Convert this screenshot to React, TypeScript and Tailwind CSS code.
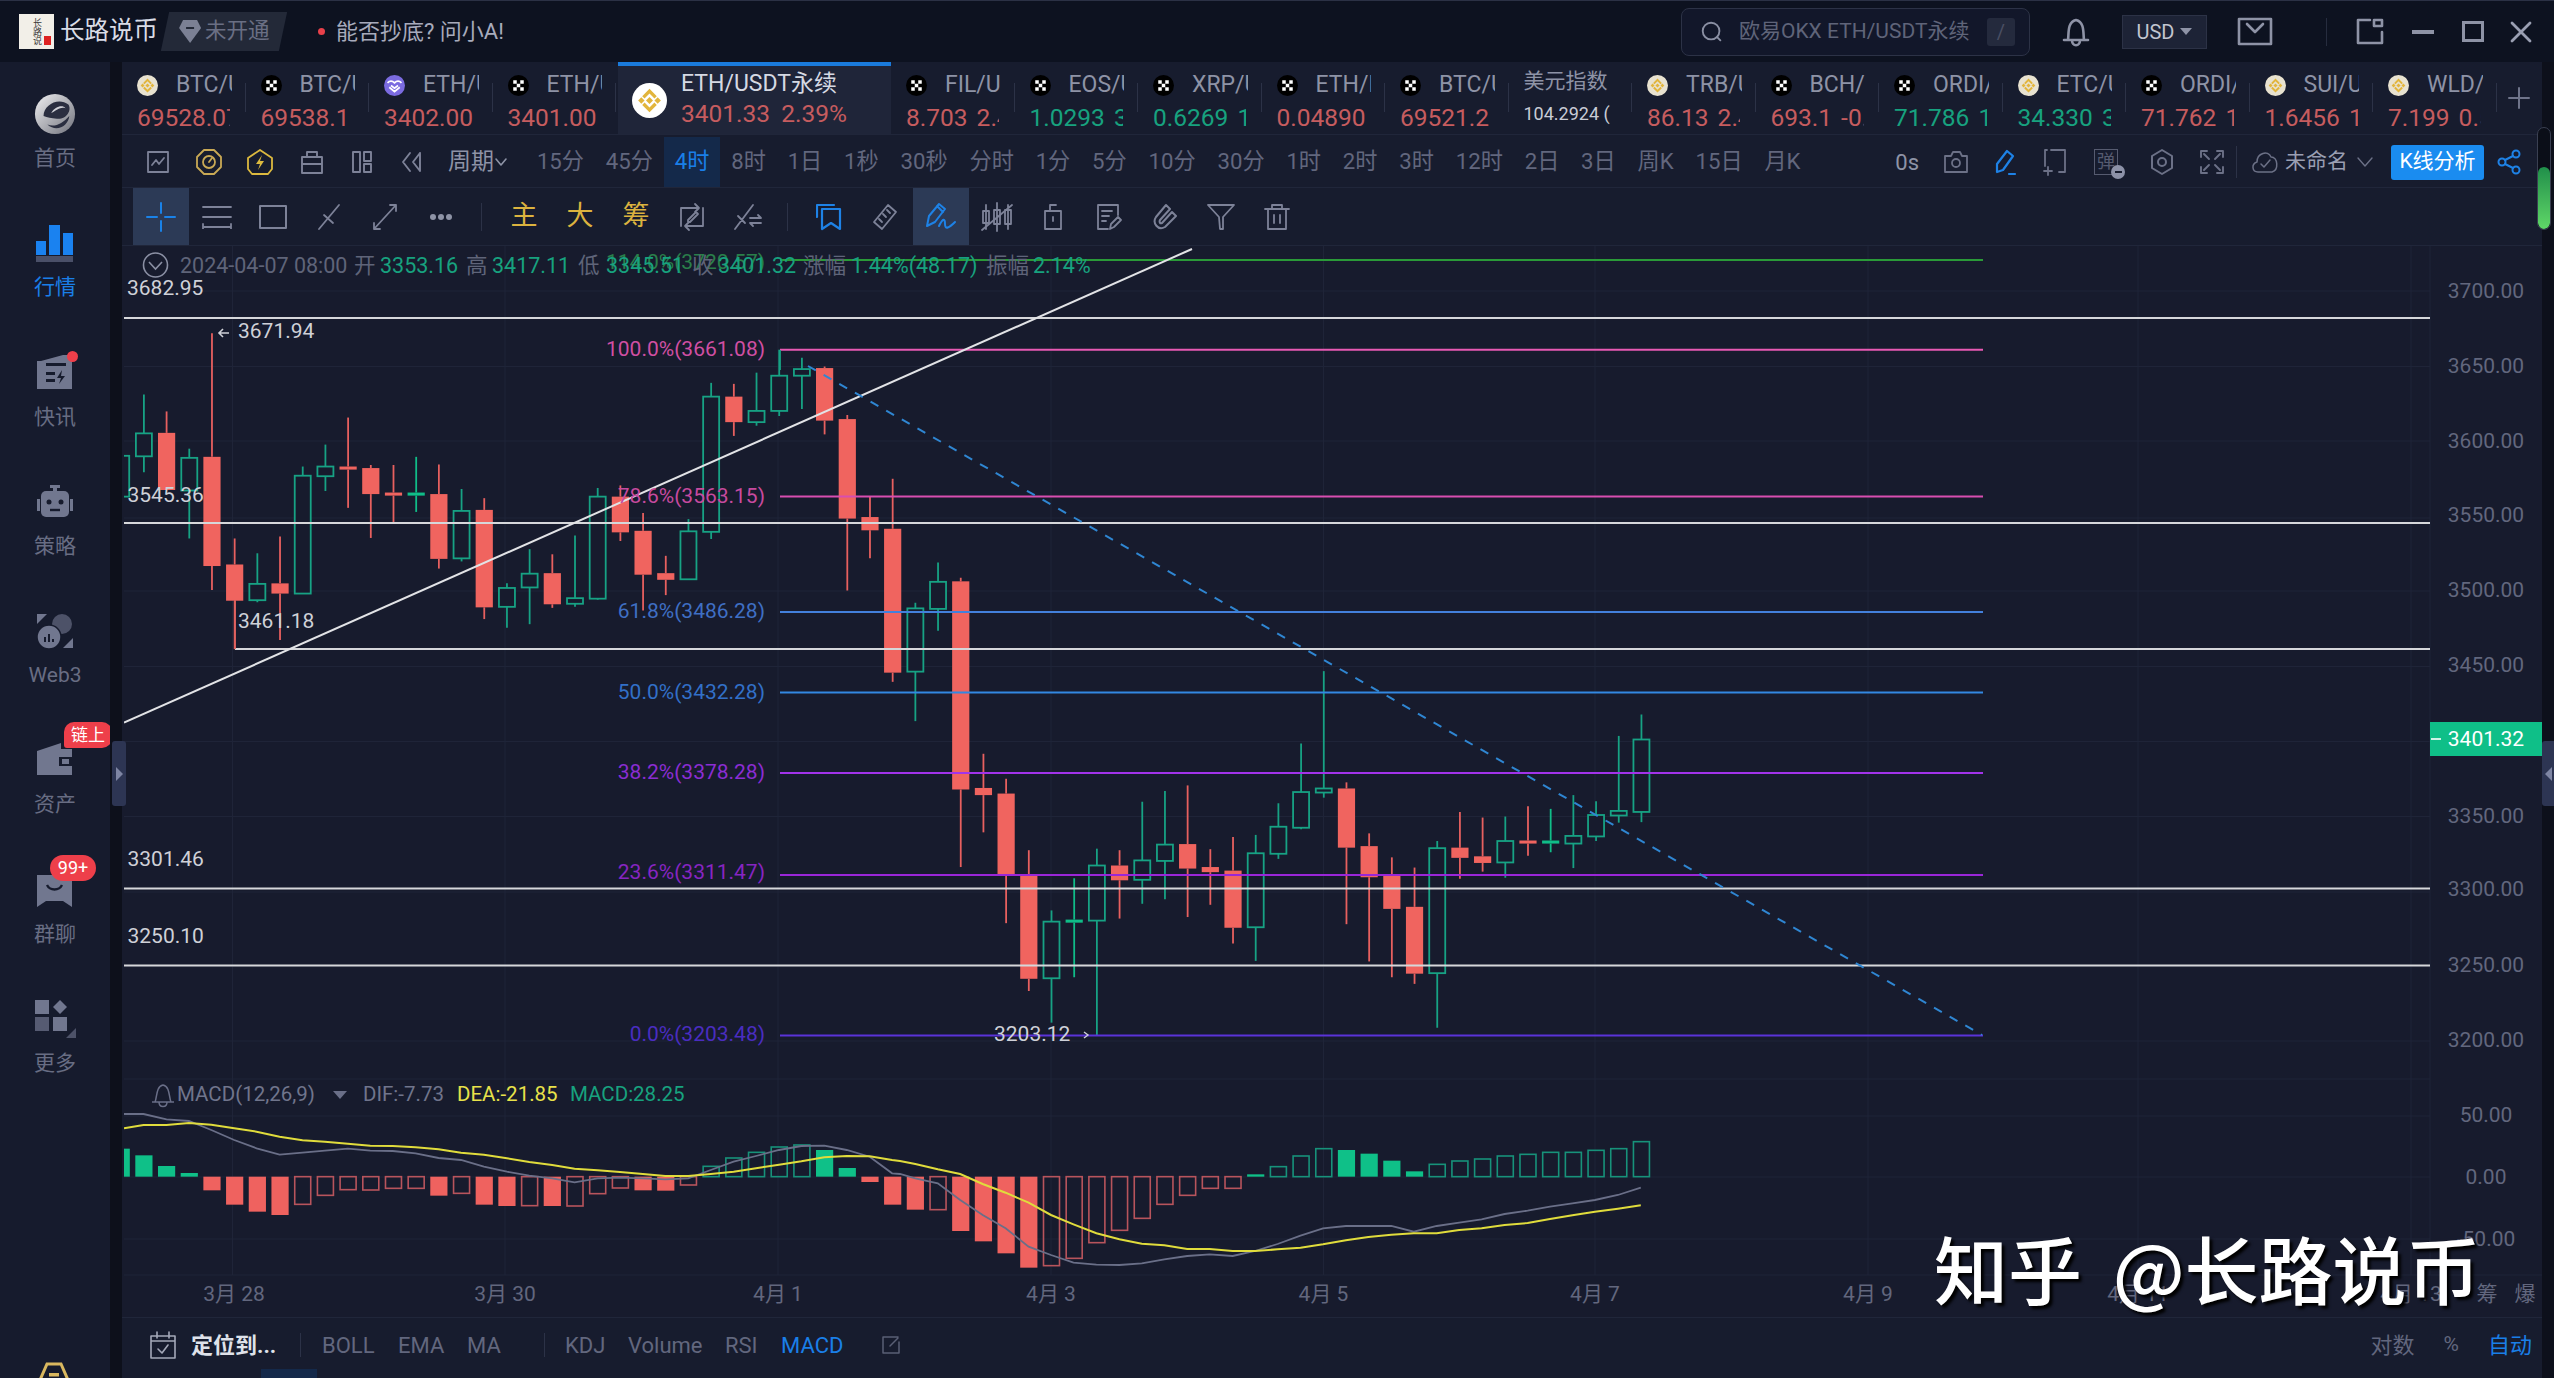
import React from "react";

const Sv = ({ w = 28, h = 28, vb = "0 0 28 28", c = "#7d8298", sw = 1.8, children }: { w?: number; h?: number; vb?: string; c?: string; sw?: number; children: React.ReactNode }) => (
  <svg width={w} height={h} viewBox={vb} fill="none" stroke={c} strokeWidth={sw} strokeLinecap="round" strokeLinejoin="round">
    {children}
  </svg>
);

const BinanceMark = ({ c = "#e2b53c" }: { c?: string }) => (
  <g fill={c} stroke="none">
    <polygon points="12,9.6 14.4,12 12,14.4 9.6,12" />
    <polygon points="6.4,9.8 8.6,12 6.4,14.2 4.2,12" />
    <polygon points="17.6,9.8 19.8,12 17.6,14.2 15.4,12" />
    <polygon points="12,4 17,9 15.4,10.6 12,7.2 8.6,10.6 7,9" />
    <polygon points="12,20 17,15 15.4,13.4 12,16.8 8.6,13.4 7,15" />
  </g>
);

const CoinIcon = ({ t, size = 21 }: { t: string; size?: number }) => (
  <svg width={size} height={size} viewBox="0 0 24 24" className="shrink-0">
    {t === "b" && (
      <>
        <circle cx="12" cy="12" r="12" fill={size > 30 ? "#ffffff" : "#e8e2d0"} />
        <BinanceMark />
      </>
    )}
    {t === "o" && (
      <>
        <circle cx="12" cy="12" r="12" fill="#000" />
        <g fill="#fff">
          <rect x="6" y="6" width="4" height="4" />
          <rect x="14" y="6" width="4" height="4" />
          <rect x="10" y="10" width="4" height="4" />
          <rect x="6" y="14" width="4" height="4" />
          <rect x="14" y="14" width="4" height="4" />
        </g>
      </>
    )}
    {t === "v" && (
      <>
        <circle cx="12" cy="12" r="12" fill="#7b6be0" />
        <path d="M4 9 Q8 5 12 9 Q16 5 20 9 M6 14 L12 19 L18 14 M8 12 L12 15 L16 12" stroke="#fff" strokeWidth="2" fill="none" />
      </>
    )}
  </svg>
);

const RED = "text-[#c65c5f]";
const GRN = "text-[#17a27f]";

const leftTabs = [
  { i: "b", l: "BTC/USDT", p: "69528.07 2.1%", r: true },
  { i: "o", l: "BTC/USDT", p: "69538.1 2.1%", r: true },
  { i: "v", l: "ETH/USDT", p: "3402.00 2.4%", r: true },
  { i: "o", l: "ETH/USDT", p: "3401.00 2.4%", r: true },
];
const rightTabs = [
  { i: "o", l: "FIL/USDT", p: "8.703 2.4%", r: true },
  { i: "o", l: "EOS/USDT", p: "1.0293 3.1%", r: false },
  { i: "o", l: "XRP/USDT", p: "0.6269 1.2%", r: false },
  { i: "o", l: "ETH/BTC", p: "0.04890 0.2%", r: true },
  { i: "o", l: "BTC/USDT", p: "69521.2 2.1%", r: true },
  { i: "x", l: "美元指数", p: "104.2924 (", r: false },
  { i: "b", l: "TRB/USDT", p: "86.13 2.4%", r: true },
  { i: "o", l: "BCH/USDT", p: "693.1 -0.2%", r: true },
  { i: "o", l: "ORDI/USDT", p: "71.786 1.2%", r: false },
  { i: "b", l: "ETC/USDT", p: "34.330 3.1%", r: false },
  { i: "o", l: "ORDI/USDT", p: "71.762 1.2%", r: true },
  { i: "b", l: "SUI/USDT", p: "1.6456 1.2%", r: true },
  { i: "b", l: "WLD/USDT", p: "7.199 0.5%", r: true },
];

const Tab = ({ t }: { t: { i: string; l: string; p: string; r: boolean } }) => {
  if (t.i === "x") {
    return (
      <div className="relative w-[123.5px] shrink-0 h-full flex pl-[15px] pr-[14px]">
        <div className="w-[95px] overflow-hidden whitespace-nowrap flex flex-col">
          <span className="text-[21px] leading-[28px] mt-[5px] text-[#8e93a6]">{t.l}</span>
          <span className="text-[18px] leading-[26px] mt-[6px] text-[#c9ccd6]">{t.p}</span>
        </div>
        <div className="absolute right-[0px] top-[21px] h-[29px] w-[1px] bg-[#2c3247]" />
      </div>
    );
  }
  return (
    <div className="relative w-[123.5px] shrink-0 h-full flex pl-[15px] pr-[14px]">
      <div className="w-[95px] overflow-hidden whitespace-nowrap flex flex-col">
        <div className="flex items-center h-[30px] mt-[8px]">
          <CoinIcon t={t.i} />
          <span className="text-[23px] ml-[18px] w-[56px] overflow-hidden text-[#8e93a6]">{t.l}</span>
        </div>
        <span className={`text-[24.5px] leading-[32px] mt-[2px] w-[93px] overflow-hidden [word-spacing:3px] ${t.r ? RED : GRN}`}>{t.p}</span>
      </div>
      <div className="absolute right-[0px] top-[21px] h-[29px] w-[1px] bg-[#2c3247]" />
    </div>
  );
};

const frames = ["15分", "45分", "4时", "8时", "1日", "1秒", "30秒", "分时", "1分", "5分", "10分", "30分", "1时", "2时", "3时", "12时", "2日", "3日", "周K", "15日", "月K"];

const TB = ({ children, active }: { children: React.ReactNode; active?: boolean }) => (
  <div className={`w-[56px] h-full shrink-0 flex items-center justify-center ${active ? "bg-[#2c3a56]" : ""}`}>{children}</div>
);

const SideItem = ({ label, color = "text-[#686d83]", children, extra }: { label: string; color?: string; children: React.ReactNode; extra?: React.ReactNode }) => (
  <div className="relative h-[129.3px] shrink-0 w-full flex flex-col items-center">
    <div className="h-[40px] flex items-center justify-center">{children}</div>
    <span className={`mt-[10px] text-[21px] leading-[28px] ${color}`}>{label}</span>
    {extra}
  </div>
);

// [kind, bodyTop, bodyBottom, wickTop, wickBottom]  (values relative to a 1.96x scale from y=290)
type C = [string, number, number, number, number];
const candles: C[] = [
  ["g", 325, 405, 300, 450],
  ["g", 281, 326, 205, 357],
  ["r", 280, 392, 238, 392],
  ["g", 329, 393, 311, 487],
  ["r", 327, 541, 85, 588],
  ["r", 538, 609, 487, 704],
  ["g", 576, 608, 516, 612],
  ["r", 575, 595, 483, 686],
  ["g", 364, 595, 346, 595],
  ["g", 346, 365, 303, 394],
  ["r", 346, 352, 250, 427],
  ["r", 349, 400, 343, 486],
  ["r", 397, 403, 343, 456],
  ["G", 397, 403, 327, 435],
  ["r", 400, 527, 342, 546],
  ["g", 433, 526, 390, 532],
  ["r", 431, 622, 408, 645],
  ["g", 584, 621, 575, 662],
  ["g", 556, 583, 508, 655],
  ["r", 555, 616, 518, 623],
  ["g", 604, 615, 481, 621],
  ["g", 405, 605, 388, 607],
  ["r", 405, 475, 383, 492],
  ["r", 472, 558, 437, 628],
  ["r", 555, 568, 521, 598],
  ["g", 473, 567, 449, 567],
  ["g", 209, 474, 182, 488],
  ["r", 209, 259, 184, 286],
  ["g", 237, 259, 162, 266],
  ["g", 168, 237, 117, 247],
  ["g", 155, 168, 133, 233],
  ["r", 153, 256, 150, 283],
  ["r", 253, 448, 245, 589],
  ["r", 445, 471, 405, 526],
  ["r", 468, 750, 370, 768],
  ["g", 624, 748, 613, 845],
  ["g", 572, 625, 534, 668],
  ["r", 571, 979, 564, 1131],
  ["r", 976, 990, 909, 1063],
  ["r", 987, 1146, 958, 1241],
  ["r", 1146, 1350, 1098, 1374],
  ["g", 1238, 1349, 1216, 1436],
  ["G", 1234, 1240, 1153, 1347],
  ["g", 1128, 1236, 1095, 1461],
  ["r", 1128, 1157, 1098, 1232],
  ["g", 1118, 1156, 1003, 1203],
  ["g", 1087, 1119, 982, 1194],
  ["r", 1086, 1134, 971, 1229],
  ["r", 1131, 1141, 1096, 1205],
  ["r", 1138, 1250, 1072, 1281],
  ["g", 1104, 1249, 1068, 1315],
  ["g", 1052, 1105, 1006, 1115],
  ["g", 984, 1054, 889, 1057],
  ["g", 977, 985, 747, 995],
  ["r", 977, 1093, 965, 1243],
  ["r", 1090, 1151, 1065, 1316],
  ["r", 1147, 1213, 1112, 1347],
  ["r", 1209, 1340, 1132, 1360],
  ["g", 1094, 1339, 1080, 1446],
  ["r", 1093, 1113, 1023, 1154],
  ["r", 1110, 1123, 1034, 1140],
  ["g", 1080, 1122, 1032, 1152],
  ["r", 1079, 1085, 1012, 1109],
  ["G", 1079, 1085, 1017, 1102],
  ["g", 1070, 1085, 990, 1133],
  ["g", 1029, 1071, 1002, 1080],
  ["g", 1021, 1030, 874, 1044],
  ["g", 881, 1023, 832, 1043],
];
const cx = (i: number) => 143.9 + 22.69 * (i - 1);
const cy = (v: number) => 290 + v / 1.96;

// MACD bars: [kind, y-edge in 3x from y=1050] zero at 380
const bars: [string, number][] = [
  ["G", 296], ["G", 316], ["G", 348], ["G", 369], ["R", 421], ["R", 464], ["R", 485], ["R", 495], ["r", 463], ["r", 436],
  ["r", 419], ["r", 420], ["r", 415], ["r", 415], ["R", 437], ["r", 430], ["R", 464], ["R", 468], ["r", 467], ["R", 468],
  ["r", 468], ["r", 431], ["r", 414], ["R", 421], ["R", 422], ["r", 405], ["g", 349], ["g", 324], ["g", 307], ["g", 291],
  ["g", 285], ["G", 300], ["G", 354], ["R", 396], ["R", 464], ["R", 479], ["r", 479], ["R", 543], ["R", 574], ["R", 610],
  ["R", 653], ["r", 647], ["r", 625], ["r", 578], ["r", 541], ["r", 505], ["r", 463], ["r", 436], ["r", 415], ["r", 415],
  ["G", 373], ["g", 350], ["g", 318], ["g", 296], ["G", 300], ["G", 311], ["G", 332], ["G", 364], ["g", 343], ["g", 333],
  ["g", 327], ["g", 318], ["g", 313], ["g", 307], ["g", 307], ["g", 301], ["g", 296], ["g", 275],
];

const dif6 = [216,192,250,192,290,208,329,213,368,240,408,270,447,295,487,314,527,308,566,302,606,296,645,302,684,303,724,310,764,324,803,330,843,350,883,365,922,377,962,385,1001,397,1041,385,1080,383,1120,385,1159,388,1199,385,1238,360,1278,335,1317,318,1357,300,1396,288,1436,287,1475,300,1515,320,1554,370];
const dif7 = [0,372,30,385,74,400,118,450,162,495,207,535,252,590,296,615,340,638,385,644,430,645,474,640,518,628,563,618,607,613,652,618,696,603,740,582,785,557,829,535,874,528,918,528,963,528,1007,545,1052,528,1096,518,1140,508,1185,492,1230,482,1274,470,1318,460,1362,450,1407,435,1452,413];
const dea6 = [216,235,250,225,290,225,329,219,368,224,408,235,447,245,487,260,527,271,566,275,606,281,645,287,684,288,724,292,764,298,803,308,843,314,883,325,922,336,962,345,1001,356,1041,361,1080,366,1120,372,1159,378,1199,378,1238,372,1278,365,1317,355,1357,344,1396,334,1436,322,1475,318,1515,319,1554,330];
const dea7 = [0,333,30,342,74,358,118,372,162,402,207,428,252,458,296,495,340,523,385,550,430,568,474,581,518,586,563,597,607,597,652,603,696,603,740,598,785,593,829,583,874,571,918,561,963,554,1007,550,1052,550,1096,540,1140,535,1185,525,1230,519,1274,507,1318,496,1362,485,1407,476,1452,466];
const toPts = (a: number[], k: number, off: number) => {
  const out: string[] = [];
  for (let i = 0; i < a.length; i += 2) out.push(`${(off + a[i] / k).toFixed(1)},${(1050 + a[i + 1] / 3).toFixed(1)}`);
  return out.join(" ");
};

const whiteLines = [318, 523, 649, 888.5, 965.5];
const fibs: [number, string, string, string][] = [
  [260, "#2a9a38", "114.0%(3720.57)", "#2a7f4a"],
  [349.7, "#e85ab4", "100.0%(3661.08)", "#d04fa3"],
  [496.6, "#d84eb0", "78.6%(3563.15)", "#c74a9f"],
  [612, "#4380dc", "61.8%(3486.28)", "#3f6fc4"],
  [692.5, "#3388e2", "50.0%(3432.28)", "#3270c8"],
  [773, "#a233ea", "38.2%(3378.28)", "#8b2dd3"],
  [875, "#9a26d8", "23.6%(3311.47)", "#8725c2"],
  [1035.4, "#5a33d8", "0.0%(3203.48)", "#4a2dc0"],
];
const prices: [string, number][] = [["3700.00", 291], ["3650.00", 366], ["3600.00", 441], ["3550.00", 515], ["3500.00", 590], ["3450.00", 665], ["3350.00", 816], ["3300.00", 889], ["3250.00", 965], ["3200.00", 1040]];
const gridH = [291, 366.5, 441, 518, 591, 666.5, 741.5, 816.5, 892, 966, 1041, 1079, 1116, 1177, 1239, 1275];
const gridV = [232.5, 505, 778, 1051, 1323.5, 1595, 1868, 2138, 2411];
const dates: [string, number][] = [["3月 28", 234], ["3月 30", 505], ["4月 1", 778], ["4月 3", 1051], ["4月 5", 1323.5], ["4月 7", 1595], ["4月 9", 1868], ["4月 11", 2138], ["4月 13", 2411]];
const info: [string, number, string][] = [
  ["2024-04-07 08:00", 180, "#5f6479"],
  ["开", 354, "#5f6479"], ["3353.16", 380, "#17a27f"],
  ["高", 466, "#5f6479"], ["3417.11", 492, "#17a27f"],
  ["低", 578, "#5f6479"], ["3345.51", 606, "#17a27f"],
  ["收", 692, "#5f6479"], ["3401.32", 718, "#17a27f"],
  ["涨幅", 803, "#5f6479"], ["1.44%(48.17)", 851, "#17a27f"],
  ["振幅", 986, "#5f6479"], ["2.14%", 1033, "#17a27f"],
];
const chartLabels: [string, number, number][] = [
  ["3682.95", 127, 288], ["3671.94", 238, 331], ["3545.36", 127.5, 495], ["3461.18", 238, 621], ["3301.46", 127.5, 859], ["3250.10", 127.5, 936], ["3203.12", 994, 1034],
];

const Chart = () => (
  <svg width={2420} height={1071} viewBox="122 246 2420 1071" className="block">
    <defs>
      <clipPath id="plot">
        <rect x="124" y="246" width="2306" height="1071" />
      </clipPath>
    </defs>
    {gridH.map((y) => <line key={y} x1="124" x2={y > 1270 ? 2542 : 2430} y1={y} y2={y} stroke="#1f2438" strokeWidth="1" />)}
    {gridV.map((x) => <line key={x} x1={x} x2={x} y1="246" y2="1275" stroke="#1f2438" strokeWidth="1" />)}
    <line x1="2430" x2="2430" y1="246" y2="1275" stroke="#1f2438" strokeWidth="1" />

    <g clipPath="url(#plot)">
      {candles.map((c, i) => {
        const x = cx(i);
        const col = c[0] === "r" ? "#e7605f" : c[0] === "G" ? "#10bd88" : "#17a284";
        return (
          <g key={i}>
            <line x1={x} x2={x} y1={cy(c[3])} y2={cy(c[1])} stroke={col} strokeWidth="1.8" />
            <line x1={x} x2={x} y1={cy(c[2])} y2={cy(c[4])} stroke={col} strokeWidth="1.8" />
            {c[0] === "g" ? (
              <rect x={x - 8} y={cy(c[1])} width="16" height={cy(c[2]) - cy(c[1])} fill="#171b2d" stroke={col} strokeWidth="1.8" />
            ) : (
              <rect x={x - 8.6} y={cy(c[1])} width="17.2" height={cy(c[2]) - cy(c[1])} fill={c[0] === "r" ? "#f0645f" : "#10bd88"} />
            )}
          </g>
        );
      })}

      {whiteLines.map((y) => <line key={y} x1={y === 649 ? 235 : 124} x2="2430" y1={y} y2={y} stroke="#d6d7da" strokeWidth="2" />)}
      <line x1="235" x2="235" y1="600" y2="649" stroke="#e0625f" strokeWidth="1.8" />
      {fibs.map((f) => <line key={f[2]} x1="780" x2="1983" y1={f[0]} y2={f[0]} stroke={f[1]} strokeWidth="2" />)}
      <line x1="124" y1="722.6" x2="1192" y2="249" stroke="#e2e3e6" strokeWidth="2" />
      <line x1="808" y1="366" x2="1982" y2="1035" stroke="#2f86d2" strokeWidth="2" strokeDasharray="9 9" />
      <line x1="780" x2="780" y1="350" y2="370" stroke="#17a284" strokeWidth="1.8" />

      {bars.map((b, i) => {
        const x = cx(i);
        const y0 = 1050 + 380 / 3;
        const y1 = 1050 + b[1] / 3;
        const top = Math.min(y0, y1);
        const h = Math.abs(y1 - y0);
        if (b[0] === "G") return <rect key={i} x={x - 8.6} y={top} width="17.2" height={h} fill="#0fc088" />;
        if (b[0] === "R") return <rect key={i} x={x - 8.6} y={top} width="17.2" height={h} fill="#ef625f" />;
        return <rect key={i} x={x - 8} y={top} width="16" height={h} fill="none" stroke={b[0] === "g" ? "#17927a" : "#b8545c"} strokeWidth="1.6" />;
      })}
      <polyline points={toPts(dif6, 1.742, 0) + " " + toPts(dif7, 1.96, 900)} fill="none" stroke="#6a6f88" strokeWidth="1.8" />
      <polyline points={toPts(dea6, 1.742, 0) + " " + toPts(dea7, 1.96, 900)} fill="none" stroke="#e0dc3c" strokeWidth="2" />
    </g>

    {/* status line */}
    <circle cx="155.5" cy="265" r="12" fill="none" stroke="#8a8fa3" strokeWidth="1.6" />
    <path d="M149 262 L155.5 269 L162 262" fill="none" stroke="#8a8fa3" strokeWidth="1.6" />
    {fibs.map((f, i) => (
      <text key={f[2]} x="765" y={i === 0 ? 262 : f[0] - (i === 6 ? 3 : 1)} textAnchor="end" dominantBaseline="central" fontSize="21" fill={f[3]}>{f[2]}</text>
    ))}
    {info.map((t) => <text key={t[0] + t[1]} x={t[1]} y="265" dominantBaseline="central" fontSize="21.5" fill={t[2]}>{t[0]}</text>)}

    {chartLabels.map((t) => <text key={t[0]} x={t[1]} y={t[2]} dominantBaseline="central" fontSize="21" fill="#cfd1d8">{t[0]}</text>)}
    <path d="M229 333 H219 M223 329 L219 333 L223 337" fill="none" stroke="#cfd1d8" strokeWidth="1.6" />
    <path d="M1084 1032 L1088 1035 L1084 1038" fill="none" stroke="#cfd1d8" strokeWidth="1.4" />

    {/* MACD legend */}
    <g fill="none" stroke="#6a6f88" strokeWidth="1.5">
      <path d="M152 1102 H174 M155 1102 C157 1098 156 1086 163 1085 C170 1086 169 1098 171 1102 M159 1102 C159 1108 167 1108 167 1102" />
    </g>
    <text x="177" y="1094" dominantBaseline="central" fontSize="20.5" fill="#70758c">MACD(12,26,9)</text>
    <polygon points="333,1091 347,1091 340,1099" fill="#6a6f88" />
    <text x="363" y="1094" dominantBaseline="central" fontSize="20.5" fill="#70758c">DIF:-7.73</text>
    <text x="457" y="1094" dominantBaseline="central" fontSize="20.5" fill="#e8e24a">DEA:-21.85</text>
    <text x="570" y="1094" dominantBaseline="central" fontSize="20.5" fill="#17a27f">MACD:28.25</text>

    {/* axes */}
    {prices.map((p) => <text key={p[0]} x="2486" y={p[1]} textAnchor="middle" dominantBaseline="central" fontSize="21" fill="#62677e">{p[0]}</text>)}
    <rect x="2430" y="722" width="112" height="34" fill="#0fbf88" />
    <line x1="2431" x2="2441" y1="739" y2="739" stroke="#fff" strokeWidth="1.6" />
    <text x="2486" y="739" textAnchor="middle" dominantBaseline="central" fontSize="21" fill="#ffffff">3401.32</text>
    <text x="2486" y="1115" textAnchor="middle" dominantBaseline="central" fontSize="21" fill="#62677e">50.00</text>
    <text x="2486" y="1177" textAnchor="middle" dominantBaseline="central" fontSize="21" fill="#62677e">0.00</text>
    <text x="2486" y="1239" textAnchor="middle" dominantBaseline="central" fontSize="21" fill="#62677e">-50.00</text>
    {dates.map((d) => <text key={d[0]} x={d[1]} y="1294" textAnchor="middle" dominantBaseline="central" fontSize="21" fill="#62677e">{d[0]}</text>)}
    <text x="2487" y="1294" textAnchor="middle" dominantBaseline="central" fontSize="21" fill="#62677e">筹</text>
    <text x="2525" y="1294" textAnchor="middle" dominantBaseline="central" fontSize="21" fill="#62677e">爆</text>
  </svg>
);

export default function App() {
  return (
    <div className="w-[2554px] h-[1378px] overflow-hidden relative flex flex-col bg-[#171b2d] [font-family:Roboto,'Noto_Sans_CJK_SC',sans-serif]">
      {/* Top bar */}
      <header className="h-[62px] shrink-0 flex items-center bg-[#0d1220] border-t border-[#2b3145] pl-[19px] pr-[22px]">
        <div className="w-[35px] h-[35px] bg-[#f2efe8] relative shrink-0 flex flex-col items-center justify-center">
          <span className="text-[#3a3a3a] text-[9px] leading-[9px] [writing-mode:vertical-rl]">长路说</span>
          <div className="absolute right-[3px] bottom-[4px] w-[7px] h-[9px] bg-[#d22]" />
        </div>
        <span className="ml-[6px] text-[24.5px] text-[#d9dce6] whitespace-nowrap">长路说币</span>
        <div className="ml-[7px] w-[118px] h-[39px] bg-[#232938] -skew-x-12 flex items-center justify-center shrink-0">
          <div className="skew-x-12 flex items-center gap-[3px]">
            <svg width="24" height="26" viewBox="0 0 24 26"><path d="M5 2 H19 L23 10 L12 25 L1 10 Z" fill="#7b8094" /><rect x="8" y="9" width="8" height="2" fill="#232938" /></svg>
            <span className="text-[21.5px] text-[#6a6f84] whitespace-nowrap">未开通</span>
          </div>
        </div>
        <div className="ml-[35px] w-[7px] h-[7px] rounded-full bg-[#e8404a] shrink-0" />
        <span className="ml-[11px] text-[22px] text-[#a7abbc] whitespace-nowrap">能否抄底? 问小A!</span>

        <div className="ml-auto flex items-center">
          <div className="w-[349px] h-[48px] rounded-[8px] border border-[#2c3246] bg-[#12172a] flex items-center pl-[17px] pr-[14px]">
            <Sv w={26} h={26} c="#8a8fa3" sw={2}><circle cx="13" cy="13" r="9" /><path d="M19.5 19.5 L23 23" /></Sv>
            <span className="ml-[14px] text-[21px] text-[#5f6479] whitespace-nowrap">欧易OKX ETH/USDT永续</span>
            <div className="ml-auto w-[28px] h-[28px] rounded-[3px] bg-[#242a3d] flex items-center justify-center text-[#4a4f63] text-[20px]">/</div>
          </div>
          <div className="ml-[30px] w-[32px] flex justify-center">
            <Sv w={30} h={32} vb="0 0 30 32" c="#8e93a6" sw={2.6}><path d="M3 24 H27 M7 24 C8 18 6 6 15 4 C24 6 22 18 23 24 M11 24 C11 31 19 31 19 24" /></Sv>
          </div>
          <div className="ml-[30px] w-[85px] h-[34px] bg-[#1d2336] border border-[#2c3246] flex items-center justify-center gap-[6px]">
            <span className="text-[20px] text-[#c2c5d0]">USD</span>
            <div className="w-0 h-0 border-l-[6px] border-r-[6px] border-t-[7px] border-l-transparent border-r-transparent border-t-[#8e93a6]" />
          </div>
          <div className="ml-[30px]">
            <Sv w={36} h={29} vb="0 0 36 29" c="#8e93a6" sw={2.6}><rect x="2" y="2" width="32" height="25" /><path d="M10 7 L18 15 L26 7" /></Sv>
          </div>
          <div className="ml-[53px] w-[1px] h-[28px] bg-[#262c3e]" />
          <div className="ml-[29px]">
            <Sv w={28} h={27} vb="0 0 28 27" c="#8e93a6" sw={2.6}><path d="M14 2 H2 V25 H26 V14 M18 2 H26 V8 H18 Z" /></Sv>
          </div>
          <div className="ml-[28px] w-[22px] h-[4px] bg-[#8e93a6]" />
          <div className="ml-[28px] w-[22px] h-[21px] border-[3px] border-[#8e93a6]" />
          <div className="ml-[26px]">
            <Sv w={22} h={22} vb="0 0 22 22" c="#9a9fb2" sw={2.8}><path d="M2 2 L20 20 M20 2 L2 20" /></Sv>
          </div>
        </div>
      </header>

      <div className="flex-1 flex min-h-0">
        {/* Sidebar */}
        <aside className="w-[110px] shrink-0 bg-[#161b2d] flex flex-col pt-[32px] relative overflow-hidden">
          <SideItem label="首页">
            <svg width="42" height="42" viewBox="0 0 44 44">
              <defs><linearGradient id="sph" x1="0" y1="0" x2="1" y2="1"><stop offset="0" stopColor="#f0f0f2" /><stop offset="1" stopColor="#70727c" /></linearGradient></defs>
              <ellipse cx="22" cy="22" rx="21" ry="21" fill="url(#sph)" />
              <path d="M10 24 C10 12 26 4 36 12 C40 18 34 28 24 27 C18 26 14 26 10 24Z" fill="#2a2e40" />
              <path d="M14 33 C22 36 30 32 37 24 C36 34 24 42 14 33Z" fill="#2a2e40" />
              <path d="M18 21 C22 14 30 12 33 16 C28 14 24 18 18 21Z" fill="#cfd0d6" />
            </svg>
          </SideItem>
          <SideItem label="行情" color="text-[#1a7fe8]">
            <svg width="38" height="37" viewBox="0 0 38 37"><rect x="0" y="16" width="10" height="14" fill="#1a82f0" /><rect x="13" y="0" width="11" height="30" fill="#1a82f0" /><rect x="27" y="8" width="10" height="22" fill="#1a82f0" /><rect x="0" y="31" width="37" height="6" fill="#4a5068" /></svg>
          </SideItem>
          <SideItem label="快讯" extra={<div className="absolute left-[67px] top-[-2px] w-[11px] h-[11px] rounded-full bg-[#ee3f4a]" />}>
            <svg width="36" height="36" viewBox="0 0 36 36"><path d="M4 6 L26 0 L35 0 V34 H0 V6Z" fill="#71778f" /><rect x="9" y="8" width="20" height="3" fill="#161b2d" /><rect x="9" y="17" width="9" height="3" fill="#161b2d" /><rect x="9" y="24" width="9" height="3" fill="#161b2d" /><path d="M25 15 L20 23 H24 L22 29 L28 21 H24 Z" fill="#161b2d" /></svg>
          </SideItem>
          <SideItem label="策略">
            <svg width="36" height="34" viewBox="0 0 36 34"><rect x="13" y="0" width="10" height="3" fill="#71778f" /><rect x="16" y="2" width="4" height="5" fill="#71778f" /><rect x="4" y="6" width="28" height="26" rx="5" fill="#71778f" /><rect x="0" y="14" width="3" height="12" fill="#71778f" /><rect x="33" y="14" width="3" height="12" fill="#71778f" /><circle cx="12" cy="17" r="2.5" fill="#161b2d" /><circle cx="24" cy="17" r="2.5" fill="#161b2d" /><path d="M13 25 H23" stroke="#161b2d" strokeWidth="2.4" /></svg>
          </SideItem>
          <SideItem label="Web3">
            <svg width="36" height="36" viewBox="0 0 36 36"><path d="M0 11 V1 H10Z" fill="#71778f" /><circle cx="25" cy="11" r="10" fill="#4d5268" /><circle cx="12" cy="24" r="12" fill="#71778f" stroke="#161b2d" strokeWidth="1.5" /><path d="M8 24 V29 M12 21 V29 M16 26 V29" stroke="#161b2d" strokeWidth="2" /><path d="M36 25 V35 H26Z" fill="#71778f" /></svg>
          </SideItem>
          <SideItem label="资产" extra={
            <div className="absolute left-[64px] top-[-18px] w-[48px] h-[26px] rounded-[10px] rounded-bl-[3px] bg-[#ee3f4a] flex items-center justify-center text-[17px] text-white leading-none">链上</div>
          }>
            <svg width="36" height="34" viewBox="0 0 36 34"><path d="M0 8 L24 0 V6 H35 V32 H0Z" fill="#71778f" /><rect x="22" y="14" width="14" height="9" fill="#161b2d" /><rect x="25" y="16" width="7" height="5" fill="#71778f" /></svg>
          </SideItem>
          <SideItem label="群聊" extra={
            <div className="absolute left-[50px] top-[-15px] w-[46px] h-[26px] rounded-full bg-[#ee3f4a] flex items-center justify-center text-[18px] text-white leading-none">99+</div>
          }>
            <svg width="36" height="34" viewBox="0 0 36 34"><path d="M0 2 H35 V34 L26 28 H9 L0 34Z" fill="#71778f" /><path d="M10 12 C13 18 22 18 25 12" fill="none" stroke="#161b2d" strokeWidth="2.4" /></svg>
          </SideItem>
          <SideItem label="更多">
            <svg width="42" height="38" viewBox="0 0 42 38"><rect x="1" y="0" width="14" height="14" fill="#71778f" /><polygon points="26,0 33,7 26,14 19,7" fill="#71778f" /><rect x="1" y="17" width="14" height="14" fill="#565b72" /><rect x="19" y="17" width="14" height="14" fill="#71778f" /><path d="M42 28 V38 H32Z" fill="#4d5268" /></svg>
          </SideItem>
          <div className="absolute left-[38px] top-[1300px]">
            <svg width="32" height="30" viewBox="0 0 32 30"><path d="M9 2 H23 L30 18 L23 30 H9 L2 18Z" fill="none" stroke="#d9b85f" strokeWidth="3" /><rect x="11" y="11" width="10" height="3.5" fill="#d9b85f" /></svg>
          </div>
        </aside>
        <div className="w-[12px] shrink-0 bg-[#0d101b]" />

        {/* Main */}
        <main className="w-[2420px] shrink-0 flex flex-col relative">
          {/* Tabs */}
          <div className="h-[73px] shrink-0 flex bg-[#171c2e] border-b border-[#20263a]">
            {leftTabs.map((t, i) => <Tab key={i} t={t} />)}
            <div className="w-[273px] ml-[2px] shrink-0 h-full bg-[#1f2539] border-t-[4px] border-[#1a7bdc] flex items-center pl-[14px]">
              <CoinIcon t="b" size={35} />
              <div className="ml-[14px] whitespace-nowrap flex flex-col">
                <span className="text-[23px] leading-[28px] mt-[-1px] text-[#d5d9e3]">ETH/USDT永续</span>
                <span className={`text-[24.5px] leading-[32px] [word-spacing:5px] ${RED}`}>3401.33 2.39%</span>
              </div>
            </div>
            {rightTabs.map((t, i) => <Tab key={i} t={t} />)}
            <div className="flex-1 flex items-center justify-center">
              <Sv w={24} h={24} vb="0 0 24 24" c="#6f748a" sw={2}><path d="M12 2 V22 M2 12 H22" /></Sv>
            </div>
          </div>

          {/* Period toolbar */}
          <div className="h-[53px] shrink-0 flex items-center bg-[#171c2e] border-b border-[#20263a] pl-[10px] pr-[21px] pt-[2px]">
            <div className="w-[51px] flex justify-center"><Sv w={22} h={22} vb="0 0 22 22" sw={1.8}><rect x="1" y="1" width="20" height="20" /><path d="M5 14 L9 9 L12 13 L17 7" /></Sv></div>
            <div className="w-[51px] flex justify-center"><Sv w={26} h={26} vb="0 0 26 26" c="#c9a955" sw={1.8}><path d="M8 1 H18 L25 8 V18 L18 25 H8 L1 18 V8Z" /><circle cx="13" cy="13" r="6" /><path d="M13 13 L16 9" /></Sv></div>
            <div className="w-[52px] flex justify-center"><Sv w={26} h={26} vb="0 0 26 26" c="#dcb93f" sw={1.8}><path d="M13 1 L25 9 V20 L21 25 H5 L1 20 V9Z" /><path d="M15 6 L9 15 H13 L11 21 L17 12 H13Z" fill="#dcb93f" stroke="none" /></Sv></div>
            <div className="w-[51px] flex justify-center"><Sv w={24} h={26} vb="0 0 24 26" sw={1.9}><path d="M2 8 H22 V24 H2Z M2 15 H22 M7 8 V3 H17 V8" /></Sv></div>
            <div className="w-[50px] flex justify-center"><Sv w={22} h={24} vb="0 0 22 24" sw={1.9}><rect x="2" y="2" width="7" height="20" /><rect x="13" y="2" width="7" height="9" /><rect x="13" y="14" width="7" height="8" /></Sv></div>
            <div className="w-[50px] flex justify-center"><Sv w={24} h={24} vb="0 0 24 24" sw={1.9}><path d="M10 3 L3 12 L10 21 M20 3 L13 12 L20 21 M20 3 V21" /></Sv></div>
            <div className="ml-[11px] w-[78px] flex items-center shrink-0">
              <span className="text-[23px] text-[#8e93a6] whitespace-nowrap">周期</span>
              <Sv w={14} h={14} vb="0 0 14 14" c="#8e93a6" sw={1.6}><path d="M2 4 L7 10 L12 4" /></Sv>
            </div>
            {frames.map((f) => (
              <div key={f} className={`h-full shrink-0 flex items-center px-[10.9px] text-[22.2px] whitespace-nowrap ${f === "4时" ? "bg-[#14294a] text-[#1a7fe8]" : "text-[#62677e]"}`}>{f}</div>
            ))}
            <div className="ml-auto flex items-center shrink-0">
              <span className="text-[22px] text-[#8e93a6]">0s</span>
              <div className="ml-[25px]"><Sv w={24} h={24} vb="0 0 24 24" c="#6c7187" sw={1.8}><path d="M1 6 H7 L9 2 H16 L18 6 H23 V22 H1Z" /><circle cx="12" cy="13" r="4" /></Sv></div>
              <div className="ml-[25px]"><Sv w={24} h={28} vb="0 0 24 28" c="#1e82e6" sw={2.2}><path d="M4 24 L4 16 L14 3 L20 8 L10 22Z M16 26 H22" /></Sv></div>
              <div className="ml-[26px]"><Sv w={24} h={28} vb="0 0 24 28" c="#6c7187" sw={1.8}><path d="M8 2 H22 V24 H16 M2 18 V2 H4 M1 23 H9 M5 19 V27" /></Sv></div>
              <div className="ml-[27px] relative w-[24px] h-[26px] border border-[#565b70] flex items-center justify-center text-[18px] leading-none text-[#565b70]">
                弹
                <div className="absolute right-[-8px] bottom-[-5px] w-[14px] h-[14px] rounded-full bg-[#8d92a8] flex items-center justify-center"><div className="w-[7px] h-[2px] bg-[#171c2e]" /></div>
              </div>
              <div className="ml-[32px]"><Sv w={24} h={28} vb="0 0 24 28" c="#6c7187" sw={2}><path d="M12 2 L22 8 V20 L12 26 L2 20 V8Z" /><circle cx="12" cy="14" r="4" /></Sv></div>
              <div className="ml-[26px]"><Sv w={24} h={24} vb="0 0 24 24" c="#6c7187" sw={1.9}><path d="M1 7 V1 H7 M17 1 H23 V7 M23 17 V23 H17 M7 23 H1 V17 M4 4 L9 9 M20 4 L15 9 M20 20 L15 15 M4 20 L9 15" /></Sv></div>
              <div className="ml-[12px] w-[1px] h-[32px] bg-[#2c3247]" />
              <div className="ml-[14px]"><Sv w={28} h={26} vb="0 0 28 26" c="#6c7187" sw={1.5}><path d="M7 23 C1 23 0 15 6 13 C6 4 17 1 20 8 C27 8 28 21 21 23Z" /><path d="M10 15 L13 18 L19 11" /></Sv></div>
              <span className="ml-[6px] text-[21px] text-[#9a9fb2] whitespace-nowrap">未命名</span>
              <div className="ml-[8px]"><Sv w={18} h={14} vb="0 0 18 14" c="#6c7187" sw={1.4}><path d="M2 3 L9 11 L16 3" /></Sv></div>
              <div className="ml-[17px] w-[93px] h-[35px] rounded-[3px] bg-[#1a8cf0] flex items-center justify-center text-[21px] text-white whitespace-nowrap">K线分析</div>
              <div className="ml-[13px]"><Sv w={24} h={26} vb="0 0 24 26" c="#1e82e6" sw={2}><circle cx="5" cy="13" r="3.5" /><circle cx="19" cy="5" r="3.5" /><circle cx="19" cy="21" r="3.5" /><path d="M8 11 L16 7 M8 15 L16 19" /></Sv></div>
            </div>
          </div>

          {/* Drawing toolbar */}
          <div className="h-[58px] shrink-0 flex items-center bg-[#171c2e] border-b border-[#20263a] pl-[11px]">
            <TB active><Sv w={30} h={30} vb="0 0 30 30" c="#1a82e8" sw={2}><path d="M15 1 V11 M15 19 V29 M1 15 H11 M19 15 H29" /></Sv></TB>
            <TB><Sv w={30} h={24} vb="0 0 30 24"><path d="M1 2 H29 M1 12 H29 M1 22 H29 M1 19 V24 M29 19 V24" /></Sv></TB>
            <TB><Sv w={28} h={24} vb="0 0 28 24" sw={2}><rect x="1" y="1" width="26" height="22" /></Sv></TB>
            <TB><Sv w={24} h={28} vb="0 0 24 28"><path d="M2 26 L22 2 M7 12 L16 20" /></Sv></TB>
            <TB><Sv w={26} h={28} vb="0 0 26 28"><path d="M2 26 L24 2 M18 2 H24 V8 M2 20 V26 H8" /></Sv></TB>
            <TB><span className="flex gap-[2px]"><span className="w-[6px] h-[6px] rounded-full bg-[#8e93a6]" /><span className="w-[6px] h-[6px] rounded-full bg-[#8e93a6]" /><span className="w-[6px] h-[6px] rounded-full bg-[#8e93a6]" /></span></TB>
            <div className="w-[27px] flex justify-start"><div className="ml-[12px] w-[1px] h-[28px] bg-[#2c3247]" /></div>
            <TB><span className="text-[27px] text-[#dcb33f]">主</span></TB>
            <TB><span className="text-[27px] text-[#dcb33f]">大</span></TB>
            <TB><span className="text-[27px] text-[#dcb33f]">筹</span></TB>
            <TB><Sv w={26} h={30} vb="0 0 26 30"><path d="M2 24 V6 H20 M16 2 L20 6 L16 10 M24 6 V24 H6 M10 20 L6 24 L10 28 M9 18 L17 10 L19 12 L11 20 H9Z" /></Sv></TB>
            <TB><Sv w={30} h={28} vb="0 0 30 28"><path d="M2 26 L20 2 M5 13 L12 20 M17 15 H28 M17 20 H28 M25 12 L28 15 M20 23 L17 20" /></Sv></TB>
            <div className="w-[25px] flex justify-start"><div className="ml-[11px] w-[1px] h-[28px] bg-[#2c3247]" /></div>
            <TB><Sv w={26} h={28} vb="0 0 26 28" c="#1e82e6" sw={2.2}><path d="M1 14 V2 H18 M6 6 H24 V26 L15 20 L6 26Z" /></Sv></TB>
            <TB><Sv w={26} h={28} vb="0 0 26 28"><path d="M2 19 L16 2 L24 9 L10 26Z M7 16 L10 19 M11 11 L14 14 M15 7 L18 10" /></Sv></TB>
            <TB active><Sv w={32} h={30} vb="0 0 32 30" c="#1e82e6" sw={2}><path d="M2 24 L4 14 L14 2 L20 7 L10 20 L2 24Z M12 4 L18 10 M14 24 C18 16 20 16 20 22 C20 28 24 26 30 20" /></Sv></TB>
            <TB><Sv w={32} h={30} vb="0 0 32 30" sw={1.8}><path d="M5 3 V27 M16 1 V29 M27 3 V27 M1 28 L31 3" /><rect x="2" y="9" width="6" height="12" /><rect x="13" y="8" width="6" height="14" /><rect x="24" y="8" width="6" height="14" /></Sv></TB>
            <TB><Sv w={20} h={28} vb="0 0 20 28"><path d="M2 8 H18 V26 H2Z M7 8 V2 H13 M10 14 V18" /></Sv></TB>
            <TB><Sv w={26} h={28} vb="0 0 26 28"><path d="M22 12 V2 H2 V26 H12 M6 8 H16 M6 13 H13 M6 18 H10 M14 26 L15 21 L22 14 L25 17 L18 24Z" /></Sv></TB>
            <TB><Sv w={26} h={28} vb="0 0 26 28" sw={2}><path d="M14 2 L4 14 C0 20 6 28 13 24 L24 13 L20 9 L10 20 C8 21 7 19 8 17 L18 6Z" /></Sv></TB>
            <TB><Sv w={28} h={28} vb="0 0 28 28"><path d="M1 2 H27 L16 14 V26 H13 L12 14Z" /></Sv></TB>
            <TB><Sv w={28} h={28} vb="0 0 28 28"><path d="M2 6 H26 M9 6 V2 H19 V6 M5 6 V26 H23 V6 M11 12 V20 M17 12 V20" /></Sv></TB>
          </div>

          {/* Chart */}
          <div className="flex-1 relative min-h-0 bg-[#171b2d]">
            <Chart />
          </div>

          {/* Bottom bar */}
          <div className="h-[61px] shrink-0 flex items-center bg-[#171c2e] border-t border-[#20263a] relative pl-[28px] pr-[10px] pb-[6px]">
            <Sv w={26} h={28} vb="0 0 26 28" c="#a4a8b8" sw={1.6}><path d="M1 5 H25 V27 H1Z M1 10 H25 M7 1 V7 M19 1 V7 M8 18 L12 22 L18 14" /></Sv>
            <span className="ml-[15px] w-[87px] text-[22px] font-bold text-[#dfe2ea] whitespace-nowrap">定位到...</span>
            <div className="ml-[22px] w-[1px] h-[24px] bg-[#2c3247]" />
            <span className="ml-[21px] w-[55px] text-[22px] text-[#62677e]">BOLL</span>
            <span className="ml-[21px] w-[48px] text-[22px] text-[#62677e]">EMA</span>
            <span className="ml-[21px] w-[34px] text-[22px] text-[#62677e]">MA</span>
            <div className="ml-[43px] w-[1px] h-[24px] bg-[#2c3247]" />
            <span className="ml-[20px] w-[40px] text-[22px] text-[#62677e]">KDJ</span>
            <span className="ml-[23px] w-[76px] text-[22px] text-[#62677e]">Volume</span>
            <span className="ml-[21px] w-[33px] text-[22px] text-[#62677e]">RSI</span>
            <span className="ml-[23px] w-[62px] text-[22px] text-[#1a7fe8]">MACD</span>
            <div className="ml-[39px]"><Sv w={18} h={18} vb="0 0 18 18" c="#5a5f75" sw={1.5}><path d="M16 1 H1 V17 H17 V6 M8 10 L16 2" /></Sv></div>
            <span className="ml-auto text-[22px] text-[#62677e]">对数</span>
            <span className="ml-[29px] text-[21px] text-[#62677e]">%</span>
            <span className="ml-[29px] text-[22px] text-[#1a7fe8]">自动</span>
          </div>
          <div className="absolute left-[139px] bottom-0 w-[56px] h-[9px] bg-[#14294a]" />

          {/* scroll indicator */}
          <div className="absolute left-[2415px] top-[65px] w-[14px] h-[103px] rounded-full bg-[#0b0e18] border border-[#3a4052] overflow-hidden">
            <div className="absolute left-0 right-0 bottom-0 h-[62px] rounded-full bg-gradient-to-b from-[#1f8f4a] to-[#5fd868]" />
          </div>
        </main>
        <div className="flex-1 bg-[#0d101b]" />
      </div>

      {/* collapse handles */}
      <div className="absolute left-[112px] top-[741px] w-[14px] h-[65px] rounded-[3px] bg-[#2d3553] flex items-center justify-center">
        <div className="w-0 h-0 border-t-[7px] border-b-[7px] border-l-[7px] border-t-transparent border-b-transparent border-l-[#7e85a3]" />
      </div>
      <div className="absolute left-[2542px] top-[741px] w-[12px] h-[65px] rounded-l-[3px] bg-[#2d3553] flex items-center justify-center">
        <div className="w-0 h-0 border-t-[7px] border-b-[7px] border-r-[7px] border-t-transparent border-b-transparent border-r-[#7e85a3]" />
      </div>

      {/* Watermark */}
      <div className="absolute left-[1934px] top-[1217px] text-[74px] leading-[100px] font-medium text-white whitespace-nowrap [word-spacing:14px] [text-shadow:3px_3px_3px_#000] [font-family:'Noto_Sans_CJK_SC',sans-serif]">知乎 @长路说币</div>
    </div>
  );
}
